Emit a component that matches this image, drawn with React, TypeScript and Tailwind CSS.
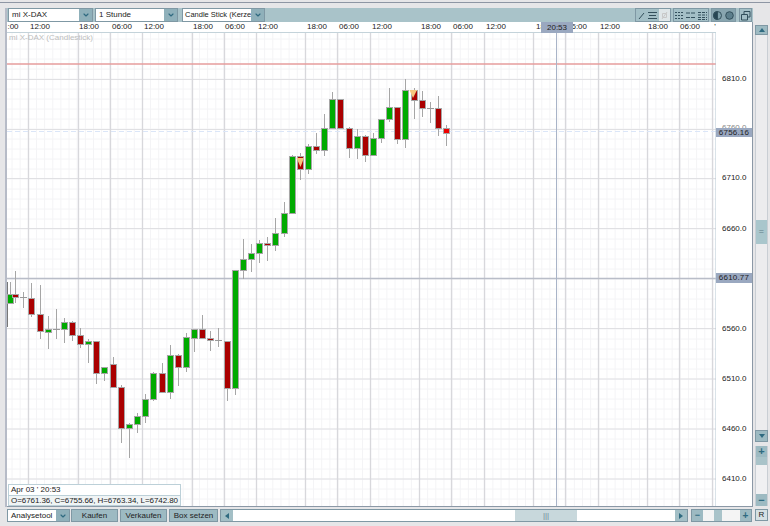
import { ChevronDown } from 'lucide-react';

const FONT = "font-['Liberation_Sans',Arial,sans-serif]";

// x, high, top, bottom, low, colour (g = up, r = down, d = doji, h = current bar)
const CANDLES: [number, number, number, number, number, string][] = [
  [10, 282, 294, 303, 303, 'g'],
  [15, 271, 294, 297, 303, 'r'],
  [23, 292, 297, 297, 308, 'd'],
  [31, 283, 298, 314, 317, 'r'],
  [40, 285, 314, 331, 339, 'r'],
  [48, 316, 329, 332, 349, 'g'],
  [56, 309, 329, 329, 339, 'd'],
  [64, 318, 322, 329, 343, 'g'],
  [72, 321, 322, 335, 341, 'r'],
  [80, 328, 335, 344, 348, 'r'],
  [88, 339, 341, 344, 363, 'g'],
  [96, 341, 341, 373, 384, 'r'],
  [104, 367, 367, 373, 381, 'g'],
  [113, 357, 364, 387, 388, 'r'],
  [121, 385, 387, 428, 443, 'r'],
  [129, 423, 424, 428, 458, 'g'],
  [137, 413, 416, 424, 433, 'g'],
  [145, 394, 399, 416, 423, 'g'],
  [153, 372, 373, 399, 401, 'g'],
  [162, 363, 373, 392, 393, 'r'],
  [170, 345, 355, 392, 399, 'g'],
  [178, 354, 355, 367, 386, 'r'],
  [186, 333, 337, 367, 372, 'g'],
  [194, 329, 329, 338, 352, 'g'],
  [202, 315, 329, 338, 338, 'r'],
  [210, 331, 338, 340, 351, 'r'],
  [218, 328, 340, 340, 347, 'd'],
  [227, 341, 341, 388, 401, 'r'],
  [235, 270, 270, 388, 395, 'g'],
  [243, 239, 259, 270, 279, 'g'],
  [251, 244, 253, 259, 272, 'g'],
  [259, 240, 243, 253, 263, 'g'],
  [267, 237, 243, 245, 261, 'r'],
  [275, 218, 233, 245, 251, 'g'],
  [284, 202, 213, 233, 237, 'g'],
  [292, 155, 156, 213, 213, 'g'],
  [300, 153, 156, 169, 180, 'r'],
  [308, 144, 146, 169, 174, 'g'],
  [316, 133, 146, 150, 154, 'r'],
  [324, 114, 128, 150, 156, 'g'],
  [332, 92, 99, 128, 129, 'g'],
  [340, 99, 99, 128, 129, 'r'],
  [349, 127, 128, 148, 158, 'r'],
  [357, 129, 136, 148, 159, 'g'],
  [365, 135, 136, 155, 162, 'r'],
  [373, 133, 138, 155, 155, 'g'],
  [381, 119, 119, 138, 143, 'g'],
  [389, 88, 107, 119, 122, 'g'],
  [397, 107, 107, 139, 144, 'r'],
  [405, 79, 90, 139, 148, 'g'],
  [414, 88, 90, 100, 119, 'r'],
  [422, 91, 100, 108, 117, 'r'],
  [430, 102, 108, 108, 123, 'd'],
  [438, 96, 108, 128, 136, 'r'],
  [446, 125, 128, 133, 146, 'h'],
];

const FILL: Record<string, string> = { g: '#00aa00', r: '#aa0000', h: '#ee0000', d: '#999999' };

const MAJOR_X = [28, 78, 110, 142, 192, 224, 256, 305, 337, 370, 419, 451, 484, 533, 565, 598, 647, 679, 712];
const MAJOR_Y = [79.5, 129.5, 178.5, 228.5, 328.5, 379, 429, 479];
const MINOR_X = Array.from({ length: 87 }, (_, i) => 12 + i * 8.15);
const MINOR_Y = Array.from({ length: 48 }, (_, i) => 39 + i * 10);

const TIME_LABELS = [
  [13, ':00'], [40, '12:00'], [89, '18:00'], [122, '06:00'], [154, '12:00'], [203, '18:00'], [235, '06:00'],
  [268, '12:00'], [317, '18:00'], [349, '06:00'], [382, '12:00'], [431, '18:00'], [463, '06:00'], [496, '12:00'],
  [546, '18:00'], [577, '06:00'], [610, '12:00'], [658, '18:00'], [690, '06:00'], [715, "'"],
] as [number, string][];

const PRICE_LABELS = [
  [79, '6810.0'], [178, '6710.0'], [229, '6660.0'], [329, '6560.0'], [379, '6510.0'], [429, '6460.0'], [479, '6410.0'],
] as [number, string][];

const BTN = 'flex items-center justify-center bg-[#9dbac2] border border-[#7f98a4]';

const Triangle = ({ dir }: { dir: 'up' | 'down' | 'left' | 'right' }) => {
  const points = { up: '0,5 3,1 6,5', down: '0,1 6,1 3,5', left: '5,0 5,6 1,3', right: '1,0 1,6 5,3' }[dir];
  return (
    <svg width="6" height="6" viewBox="0 0 6 6">
      <polygon points={points} fill="#2f6a80" />
    </svg>
  );
};

const Select = ({ label, w, text }: { label: string; w: string; text: string }) => (
  <div className={`flex h-[14px] shrink-0 border border-[#7f98a4] bg-white ${w}`}>
    <span className={`flex-1 overflow-hidden whitespace-nowrap pl-[2px] leading-[12px] text-[#222] ${text}`}>
      {label}
    </span>
    <span className="flex w-[13px] shrink-0 items-center justify-center bg-[#8fb0ba]">
      <ChevronDown size={8} strokeWidth={3.5} className="text-[#2f6a80]" />
    </span>
  </div>
);

const ToolIcon = ({ kind }: { kind: string }) => (
  <svg width="11" height="11" viewBox="0 0 11 11" fill="none" stroke="#33505c" strokeWidth="1">
    {kind === 'slash' && <path d="M3 9 L8 3" />}
    {kind === 'lines' && <path d="M1 2.5 H10 M2 5.5 H9 M1 8.5 H10" />}
    {kind === 'off' && <path d="M3 9 L8 2 M3.5 3.5 h4 v4 h-4 z" stroke="#c8c8c8" />}
    {kind === 'grid1' && <path d="M1 2.5 H10 M1 5.5 H10 M1 8.5 H10" strokeDasharray="2 1" />}
    {kind === 'grid2' && <path d="M1 3 H10 M1 7.5 H10" strokeDasharray="4 1" />}
    {kind === 'grid3' && <path d="M1 2.5 H10 M1 5 H10 M1 7.5 H10 M1 9.5 H10" strokeDasharray="3 1" />}
    {kind === 'half' && (
      <>
        <circle cx="5.5" cy="5.5" r="4" fill="#7fa0aa" />
        <path d="M5.5 1.5 A4 4 0 0 0 5.5 9.5 Z" fill="#274654" />
      </>
    )}
    {kind === 'dot' && <circle cx="5.5" cy="5.5" r="3.8" fill="#5d7f8c" />}
    {kind === 'win' && <path d="M1.5 4.5 h6 v5.5 h-6 z M4 4.5 v-3 h6 v5.5 h-2.5" />}
  </svg>
);

const ToolGroup = ({ items, w, active }: { items: string[]; w: string; active?: boolean }) => (
  <div className={`flex h-[14px] shrink-0 border border-[#7f98a4] ${w}`}>
    {items.map((k, i) => (
      <span
        key={i}
        className={`flex flex-1 items-center justify-center ${
          k === 'off' ? 'bg-[#dfe6e8]' : active ? 'bg-[#88a5af]' : 'bg-[#a3bfc6]'
        }`}
      >
        <ToolIcon kind={k} />
      </span>
    ))}
  </div>
);

const Chart = () => (
  <svg className="block h-[473px] w-[709px]" viewBox="7 33 709 473">
    <rect x="7" y="33" width="709" height="473" fill="#ffffff" />
    {MINOR_X.map((x) => (
      <line key={x} x1={x} x2={x} y1="33" y2="506" stroke="#f4f4f6" />
    ))}
    {MINOR_Y.map((y) => (
      <line key={y} x1="7" x2="716" y1={y} y2={y} stroke="#f4f4f6" />
    ))}
    {MAJOR_Y.map((y) => (
      <line key={y} x1="7" x2="716" y1={y} y2={y} stroke="#e0e0e3" />
    ))}
    {MAJOR_X.map((x) => (
      <line key={x} x1={x + 0.5} x2={x + 0.5} y1="33" y2="506" stroke="#d8d8dc" strokeWidth="1.3" />
    ))}
    <line x1="7" x2="716" y1="64" y2="64" stroke="#e69c9c" strokeWidth="1.4" />
    <line x1="7" x2="716" y1="278.5" y2="278.5" stroke="#b9bdc8" strokeWidth="1.4" />
    <line x1="7" x2="716" y1="131.5" y2="131.5" stroke="#dbe6f8" strokeDasharray="5 3" />
    <line x1="556.5" x2="556.5" y1="33" y2="506" stroke="#a9b4c8" />
    <line x1="7.5" x2="7.5" y1="282" y2="327" stroke="#777777" />
    {CANDLES.map(([x, hi, top, bot, lo, c]) => (
      <g key={x}>
        <line x1={x + 0.5} x2={x + 0.5} y1={hi} y2={lo} stroke="#a6a6a6" />
        {c === 'd' ? (
          <line x1={x - 3} x2={x + 4} y1={top + 0.5} y2={top + 0.5} stroke="#999999" />
        ) : (
          <rect
            x={Math.max(x - 2.5, 7.5)}
            y={top + 0.5}
            width={x - 2.5 < 7.5 ? 5 : 6}
            height={bot - top}
            fill={FILL[c]}
            stroke="#a6a6a6"
          />
        )}
      </g>
    ))}
    <polygon points="296.5,158 304,158 300.5,167" fill="#f5c77e" />
    <polygon points="409.5,90 417,90 413,98" fill="#f5c77e" />
    <rect x="715.5" y="33" width="1" height="473" fill="#b4c6d2" />
  </svg>
);

export default function App() {
  return (
    <div className={`flex h-[526px] w-[770px] flex-col overflow-hidden bg-[#e6e6e8] ${FONT}`}>
      <div className="mt-[2px] h-px shrink-0 bg-[#8e96a4]" />
      <div className="flex flex-1 pt-[5px]">
        <div className="h-[499px] w-[7px] shrink-0 border-r-2 border-[#b6bbc7]" />
        <div className="flex w-[746px] shrink-0 flex-col">
          {/* toolbar */}
          <div className="flex h-[14px] shrink-0 items-center bg-[#a9c3c9] pl-px">
            <Select label="mi X-DAX" w="w-[85px]" text="pl-[3px] text-[8px]" />
            <div className="w-[2px] shrink-0" />
            <Select label="1 Stunde" w="w-[83px]" text="pl-[3px] text-[8px]" />
            <div className="w-[4px] shrink-0" />
            <Select label="Candle Stick (Kerze" w="w-[83px]" text="text-[7.5px]" />
            <div className="ml-auto flex pr-px">
              <ToolGroup items={['slash', 'lines', 'off']} w="w-[36px]" />
              <ToolGroup items={['grid1', 'grid2', 'grid3']} w="ml-[2px] w-[36px]" />
              <ToolGroup items={['half', 'dot']} w="ml-[2px] w-[25px]" active />
              <ToolGroup items={['win']} w="ml-[3px] w-[13px]" />
            </div>
          </div>

          <div className="flex h-[485px] shrink-0 border-b border-[#8b98a6]">
            <div className="relative w-[709px] shrink-0 bg-white">
              {/* time axis */}
              <div className="relative h-[11px] border-b border-[#c4d3da] text-[8px] leading-[10px] text-[#222]">
                {TIME_LABELS.map(([x, t]) => (
                  <span key={x} className="absolute top-0 -translate-x-1/2" style={{ left: x - 7 }}>
                    {t}
                  </span>
                ))}
              </div>
              <Chart />
              <span className="absolute left-[2px] top-[11px] text-[8px] leading-[10px] text-[#bdbdbd]">
                mi X-DAX (Candlestick)
              </span>
              <span className="absolute left-[534px] top-0 h-[11px] w-[32px] bg-[#9aa8c0] text-center text-[8px] leading-[11px] text-[#222]">
                20:53
              </span>
              {/* ohlc box */}
              <div className="absolute left-[1px] top-[462px] w-[173px] border border-[#bcd0d8] text-[8px] text-[#222]">
                <div className="h-[10px] bg-white pl-[2px] leading-[10px]">Apr 03 ' 20:53</div>
                <div className="h-[10px] border-t border-[#bcd0d8] bg-[#f0f4f5] pl-[2px] leading-[10px] tracking-[-0.07px]">
                  O=6761.36, C=6755.66, H=6763.34, L=6742.80
                </div>
              </div>
            </div>

            {/* price axis */}
            <div className="relative w-[37px] shrink-0 border-r border-[#8b98a6] bg-white text-[8px] leading-[10px] text-[#222]">
              <span className="absolute left-[6px] top-[101px] text-[#888]">6760.0</span>
              {PRICE_LABELS.map(([y, t]) => (
                <span key={t} className="absolute left-[6px]" style={{ top: y - 27 }}>
                  {t}
                </span>
              ))}
              <span className="absolute left-0 top-[106px] h-[9px] w-full bg-[#9aa8c0] text-center leading-[9px] tracking-[0.2px]">
                6756.16
              </span>
              <span className="absolute left-0 top-[251px] h-[10px] w-full bg-[#9aa8c0] text-center leading-[10px] tracking-[0.2px]">
                6610.77
              </span>
            </div>
          </div>

          {/* bottom bar */}
          <div className="mt-[2px] flex h-[13px] shrink-0 text-[8px] text-[#222]">
            <div className="flex w-[63px] shrink-0 border border-[#7f98a4] bg-white">
              <span className="flex-1 pl-[3px] leading-[11px]">Analysetool</span>
              <span className="flex w-[13px] items-center justify-center bg-[#8fb0ba]">
                <ChevronDown size={8} strokeWidth={3.5} className="text-[#2f6a80]" />
              </span>
            </div>
            <span className={`${BTN} ml-px w-[47px] shrink-0`}>Kaufen</span>
            <span className={`${BTN} ml-[2px] w-[47px] shrink-0`}>Verkaufen</span>
            <span className={`${BTN} ml-[2px] w-[49px] shrink-0`}>Box setzen</span>
            <div className="ml-[2px] flex w-[468px] shrink-0 border border-[#7f98a4] bg-white">
              <span className="flex w-[12px] items-center justify-center bg-[#a3bfc6]">
                <Triangle dir="left" />
              </span>
              <span className="ml-[282px] flex w-[62px] items-center justify-center bg-[#c8d8dc] text-[#6f8b96]">|||</span>
              <div className="flex-1" />
              <span className="flex w-[12px] items-center justify-center bg-[#a3bfc6]">
                <Triangle dir="right" />
              </span>
            </div>
            <div className="ml-[3px] flex w-[61px] shrink-0 border border-[#7f98a4] bg-[#f4f4f4]">
              <span className="flex w-[11px] items-center justify-center bg-[#9dbac2] text-[9px] font-bold leading-none text-[#2f6a80]">−</span>
              <div className="w-[11px]" />
              <span className="w-[8px] bg-[#a9c3c9]" />
              <div className="flex-1" />
              <span className="flex w-[11px] items-center justify-center bg-[#9dbac2] text-[10px] font-bold leading-none text-[#2f6a80]">+</span>
            </div>
          </div>
        </div>

        {/* right scroll column */}
        <div className="ml-[2px] flex w-[13px] shrink-0 flex-col pt-[17px]">
          <span className={`${BTN} h-[10px] shrink-0`}>
            <Triangle dir="up" />
          </span>
          <div className="flex h-[395px] shrink-0 flex-col border-x border-[#c9ced4] bg-[#ececee] pt-[185px]">
            <span className="flex h-[24px] items-center justify-center bg-[#a9c6cc] text-[9px] text-[#5f7c88]">=</span>
          </div>
          <span className={`${BTN} h-[12px] shrink-0`}>
            <Triangle dir="down" />
          </span>
          <div className="mt-[4px] flex h-[60px] shrink-0 flex-col border-x border-[#c9ced4] bg-[#f0f0f2]">
            <span className="flex h-[11px] items-center justify-center bg-[#9dbac2] text-[11px] font-bold leading-none text-[#2f6a80]">+</span>
            <span className="h-[8px] bg-[#a9c3c9]" />
            <div className="flex-1" />
            <span className="flex h-[12px] items-center justify-center bg-[#9dbac2] text-[11px] font-bold leading-none text-[#2f6a80]">−</span>
          </div>
          <span className="mt-[3px] flex h-[12px] shrink-0 items-center justify-center border border-[#7f98a4] bg-[#d5e0e3] text-[8px] text-[#222]">
            R
          </span>
        </div>
      </div>
    </div>
  );
}
